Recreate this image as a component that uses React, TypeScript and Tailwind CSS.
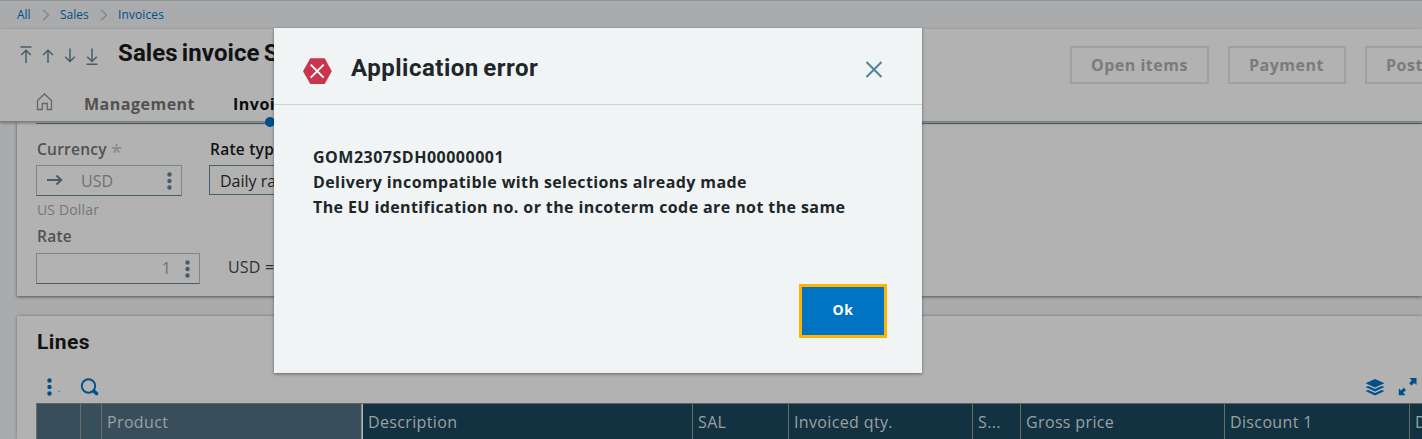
import type { ReactNode } from "react";

const columns = [
  { label: "", width: "w-[44px]", tone: "bg-[#384f5b]" },
  { label: "", width: "w-[21px]", tone: "bg-[#384f5b]" },
  { label: "Product", width: "w-[261px]", tone: "bg-[#384f5b]" },
  { label: "Description", width: "w-[330px]", tone: "bg-[#123241]" },
  { label: "SAL", width: "w-[96px]", tone: "bg-[#123241]" },
  { label: "Invoiced qty.", width: "w-[184px]", tone: "bg-[#123241]" },
  { label: "S...", width: "w-[48px]", tone: "bg-[#123241]" },
  { label: "Gross price", width: "w-[204px]", tone: "bg-[#123241]" },
  { label: "Discount 1", width: "w-[185px]", tone: "bg-[#123241]" },
  { label: "D", width: "w-[120px]", tone: "bg-[#123241]" },
];

function Chevron() {
  return (
    <svg width="8" height="12" viewBox="0 0 8 12" fill="none" stroke="#878787" strokeWidth="1.5">
      <path d="M1 .7 6.5 6 1 11.3" />
    </svg>
  );
}

function Dots({ color = "#455e69" }: { color?: string }) {
  return (
    <svg width="5" height="18" viewBox="0 0 5 18" fill={color}>
      <circle cx="2.5" cy="2.5" r="2.2" />
      <circle cx="2.5" cy="9" r="2.2" />
      <circle cx="2.5" cy="15.5" r="2.2" />
    </svg>
  );
}

function NavArrow({ d }: { d: string }) {
  return (
    <svg width="12" height="20" viewBox="0 0 12 20" fill="none" stroke="#455e69" strokeWidth="1.5">
      <path d={d} />
    </svg>
  );
}

function ToolbarButton({ width, children }: { width: string; children: ReactNode }) {
  return (
    <button className={`h-[38px] shrink-0 border-2 border-[#9ca1a4] pl-[19px] text-left text-[16px] leading-[34px] font-bold tracking-[0.5px] whitespace-nowrap text-[#7b7b7b] ${width}`}>
      {children}
    </button>
  );
}

function Breadcrumbs() {
  return (
    <nav className="flex h-[29px] items-center border-t border-[#8c9498] bg-[#a9abac] pl-[17px] text-[12px] text-[#00508a]">
      <span className="w-[25px]">All</span>
      <Chevron />
      <span className="ml-[10px] w-[40px]">Sales</span>
      <Chevron />
      <span className="ml-[10px] tracking-[0.1px]">Invoices</span>
    </nav>
  );
}

function Header() {
  return (
    <header className="relative z-10 h-[93px] border-b border-[#7d7d7d] bg-[#b2b2b2] shadow-[0_1px_3px_rgba(0,0,0,0.35)]">
      <div className="flex h-[60px] overflow-hidden">
        <div className="flex w-[118px] shrink-0 gap-[10px] pt-[17px] pl-[20px]">
          <NavArrow d="M.5 1h11M6 17V4M1.2 9 6 4.2 10.8 9" />
          <NavArrow d="M6 17V4M1.2 9 6 4.2 10.8 9" />
          <NavArrow d="M6 2.5v13M1.2 10.7 6 15.5l4.8-4.8" />
          <NavArrow d="M6 2.5v13M1.2 10.7 6 15.5l4.8-4.8M.5 18.2h11" />
        </div>
        <h1 className="w-[952px] shrink-0 pt-[8px] font-[Roboto,sans-serif] text-[24px] leading-[32px] font-bold tracking-[0.1px] [word-spacing:-2px] whitespace-nowrap text-[#121212]">
          Sales invoice SDH
        </h1>
        <div className="flex shrink-0 gap-[19px] pt-[17px]">
          <ToolbarButton width="w-[139px]">Open items</ToolbarButton>
          <ToolbarButton width="w-[118px]">Payment</ToolbarButton>
          <ToolbarButton width="w-[100px]">Post</ToolbarButton>
        </div>
      </div>
      <div className="flex h-[32px] pl-[36px] text-[16px] leading-[30px] font-bold tracking-[0.5px]">
        <svg className="mt-[4px]" width="17" height="18" viewBox="0 0 17 18" fill="none" stroke="#666" strokeWidth="1.3">
          <path d="M1.5 16.5V7.5L8.5 1l7 6.5v9h-4.3v-6H6.3v6H1.5Z" />
        </svg>
        <span className="ml-[31px] w-[149px] text-[#515151]">Management</span>
        <span className="text-[#0b0b0b]">Invoicing</span>
      </div>
      <span className="absolute top-[88px] left-[265px] size-[10px] rounded-full bg-[#00508a]" />
    </header>
  );
}

function Details() {
  return (
    <section className="ml-[17px] h-[174px] bg-[#b2b2b2] pl-[19px] shadow-[0_1px_3px_rgba(0,0,0,0.5)]">
      <div className="h-[2px] border-b border-[#4d6b7e]" />
      <div className="flex pt-[15px]">
        <div className="w-[173px]">
          <label className="block h-[20px] pl-px text-[15.5px] leading-[20px] font-semibold tracking-[0.25px] text-[#515151]">
            Currency <span className="inline-block align-[-4px] text-[20px] leading-[10px] font-normal text-[#858585]">*</span>
          </label>
          <div className="mt-[6px] flex h-[31px] w-[146px] items-center border border-[#7c878c] border-b-[#455e69] pr-[9px] pl-[10px] text-[16px] text-[#717171]">
            <svg width="16" height="12" viewBox="0 0 16 12" fill="none" stroke="#455e69" strokeWidth="2">
              <path d="M0 5h14M9.5 .5 14.2 5 9.5 9.5" />
            </svg>
            <span className="ml-[18px] flex-1">USD</span>
            <Dots />
          </div>
          <p className="mt-[5px] pl-px text-[14px] leading-[18px] tracking-[0.15px] text-[#777]">US Dollar</p>
        </div>
        <div className="w-[300px]">
          <label className="block h-[20px] pl-px text-[15.5px] leading-[20px] font-semibold tracking-[0.25px] text-[#121212]">Rate type</label>
          <div className="mt-[6px] h-[30px] w-[160px] border border-[#455e69] pl-[10px] text-[16px] leading-[30px] text-[#202020]">Daily rate</div>
        </div>
      </div>
      <label className="mt-[7px] block h-[20px] pl-px text-[15.5px] leading-[20px] font-semibold tracking-[0.25px] text-[#515151]">Rate</label>
      <div className="mt-[7px] flex items-start">
        <div className="flex h-[31px] w-[164px] items-center justify-end gap-[14px] border border-[#7c878c] border-b-[#455e69] pr-[9px] text-[16px] text-[#717171]">
          <span className="-mt-[2px]">1</span>
          <Dots />
        </div>
        <span className="ml-[28px] text-[16px] leading-[28px] tracking-[0.2px] text-[#303030]">USD =</span>
      </div>
    </section>
  );
}

function Lines() {
  return (
    <section className="mt-[20px] ml-[17px] h-[123px] bg-[#b2b2b2] pl-[19px] shadow-[0_0_3px_rgba(0,0,0,0.35)]">
      <h2 className="h-[60px] pt-[12px] pl-px font-[Roboto,sans-serif] text-[21px] leading-[28px] font-bold tracking-[0.4px] text-[#121212]">Lines</h2>
      <div className="flex h-[27px] items-start pl-[11px]">
        <div className="pt-[2px]">
          <Dots color="#00508a" />
        </div>
        <span className="ml-[6px] h-[18px] w-[3px] text-[9px] leading-[26px] text-[#00508a]">.</span>
        <svg className="mt-[2px] ml-[19px]" width="19" height="19" viewBox="0 0 19 19" fill="none" stroke="#00508a">
          <circle cx="8.5" cy="8" r="6.7" strokeWidth="1.9" />
          <path d="m14 13.2 2.5 2.3" strokeWidth="3.6" strokeLinecap="round" />
        </svg>
        <svg className="mt-[3px] ml-auto" width="20" height="18" viewBox="0 0 20 18" fill="#00508a">
          <path d="M10 0 19.5 4.3 10 8.6.5 4.3Z" />
          <path d="m.5 8 2.6-1.1L10 10.1l6.9-3.2L19.5 8 10 12.6Z" />
          <path d="m.5 12 2.6-1.1 6.9 3.2 6.9-3.2 2.6 1.1-9.5 4.6Z" />
        </svg>
        <svg className="mt-[2px] mr-[5px] ml-[13px]" width="19" height="18" viewBox="0 0 19 18" fill="#00508a">
          <path d="M11.5 0H18.5V7L16.4 5 13.4 7.4 11.2 5.3 13.8 2.3Z" />
          <path d="M.8 10.3 3 12.5 5.9 9.8 8 12 5.2 14.8 7.5 17.2H.8Z" />
        </svg>
      </div>
      <div className="flex h-[36px] overflow-hidden border-t border-[#61655f]">
        {columns.map((c, i) => (
          <div
            key={i}
            className={`h-[35px] shrink-0 border-l pl-[5px] text-[16px] leading-[36px] tracking-[0.36px] whitespace-nowrap text-[#9ba1a2] ${c.width} ${c.tone} ${i === 3 ? "border-[#b2b2b2] shadow-[-1px_0_0_#8b8f8d]" : "border-[#696d67]"}`}
          >
            {c.label}
          </div>
        ))}
      </div>
    </section>
  );
}

function ErrorDialog() {
  return (
    <div className="absolute inset-0 z-20 flex items-start">
      <div role="dialog" className="mt-[28px] ml-[274px] h-[345px] w-[648px] bg-[#f0f4f5] shadow-[0_1px_3px_rgba(0,0,0,0.45)]">
        <div className="flex h-[77px] items-start border-b border-[#ccd3d6] pr-[39px] pl-[29px]">
          <svg className="mt-[30px]" width="29" height="27" viewBox="0 0 29 27">
            <path d="M7.3.3h14.4L28.8 13.2l-7.1 12.7H7.3L0 13.2Z" fill="#c9354d" />
            <path d="m7.7 6.7 13 13M20.7 6.7l-13 13" stroke="#fff" strokeWidth="1.9" />
          </svg>
          <h2 className="ml-[19px] pt-[24px] font-[Roboto,sans-serif] text-[24px] leading-[32px] font-bold tracking-[0.5px] [word-spacing:-2px] text-[#20262a]">Application error</h2>
          <svg className="mt-[33px] ml-auto" width="18" height="17" viewBox="0 0 18 17" stroke="#54829b" strokeWidth="2.1">
            <path d="m1.5 1 15 15M16.5 1l-15 15" />
          </svg>
        </div>
        <div className="h-[179px] pt-[40px] pl-[39px] text-[16px] leading-[25px] font-bold text-[#202628]">
          <p className="tracking-[0.5px]">GOM2307SDH00000001</p>
          <p className="tracking-[0.41px]">Delivery incompatible with selections already made</p>
          <p className="tracking-[0.4px]">The EU identification no. or the incoterm code are not the same</p>
        </div>
        <button className="ml-[525px] block h-[54px] w-[88px] border-3 border-[#ffb500] bg-[#0073c2] pb-[2px] text-[14px] leading-[46px] font-bold tracking-[0.7px] text-white">
          Ok
        </button>
      </div>
    </div>
  );
}

export default function App() {
  return (
    <main className="relative h-[439px] w-[1422px] overflow-hidden bg-[#a9abad] font-['Open_Sans',sans-serif]">
      <Breadcrumbs />
      <Header />
      <Details />
      <Lines />
      <ErrorDialog />
    </main>
  );
}
